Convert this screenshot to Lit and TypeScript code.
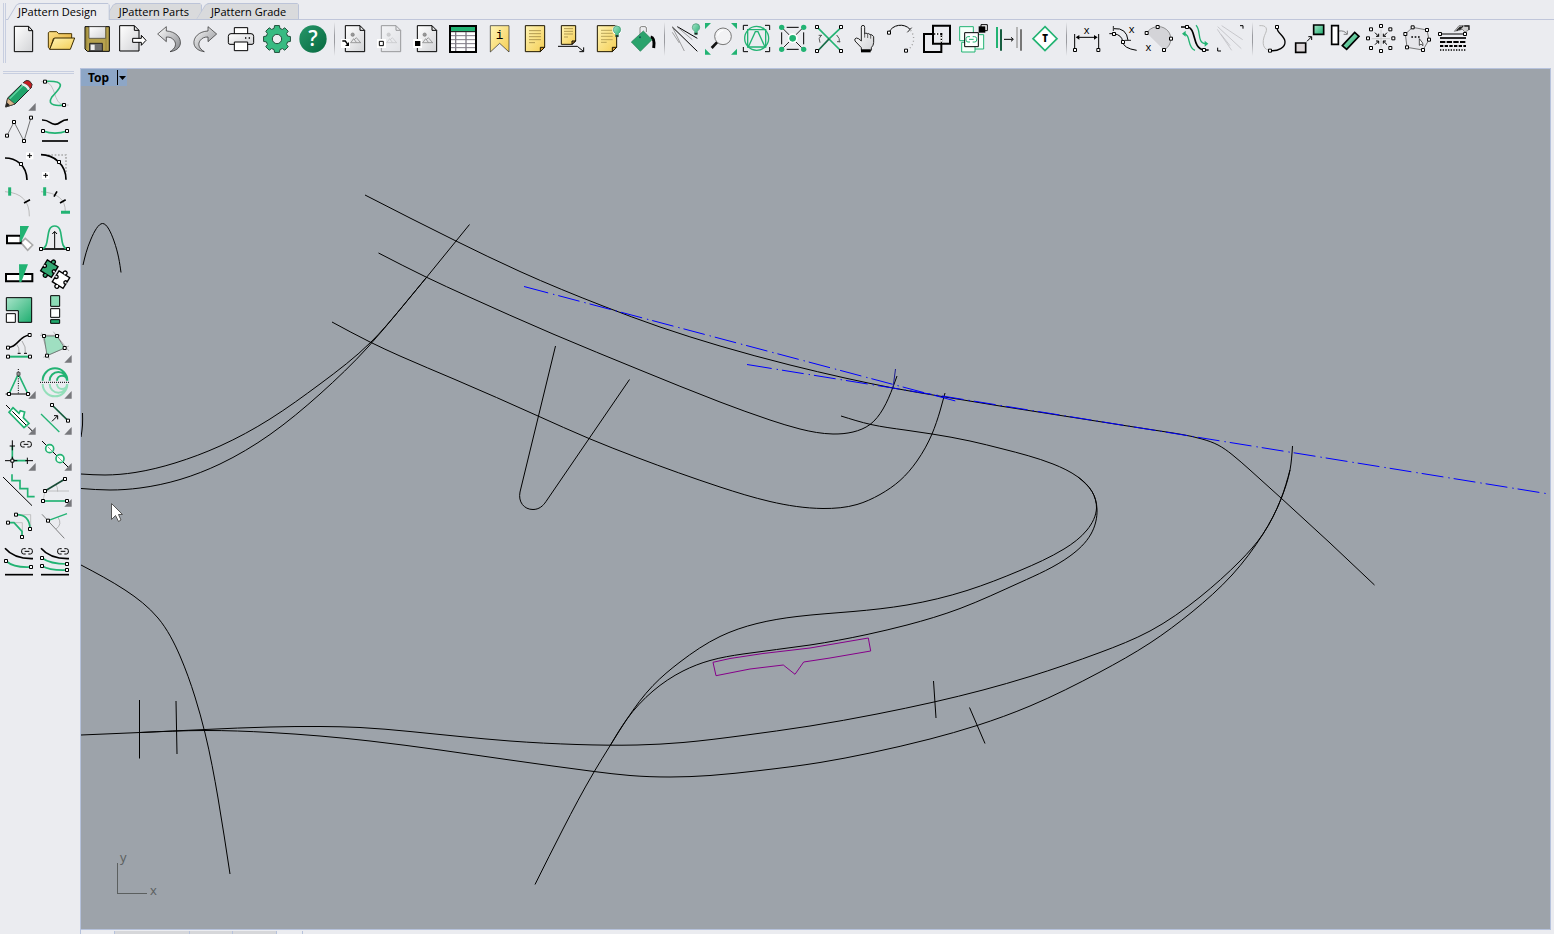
import { LitElement, html, svg, css, TemplateResult, SVGTemplateResult } from "lit";
import { customElement, property, state } from "lit/decorators.js";
import { classMap } from "lit/directives/class-map.js";

type Point = [number, number];
type Art = SVGTemplateResult;
interface Tool { name: string; art: Art; menu?: boolean }
/* A sheet holds icon artwork at three units per pixel; each cell is 108 units wide. */
interface Sheet { x: number; y: number; tools: Tool[] }

const GREEN = "#22b373";

const line = (d: string, color = "#000", width = 3, dash = ""): Art =>
  svg`<path d=${d} fill="none" stroke=${color} stroke-width=${width} stroke-dasharray=${dash}></path>`;
const shape = (d: string, fill = "#fff", stroke = "#000", width = 3): Art =>
  svg`<path d=${d} fill=${fill} stroke=${stroke} stroke-width=${width}></path>`;
const dot = (x: number, y: number, r: number, fill = GREEN, stroke = "none", width = 3): Art =>
  svg`<circle cx=${x} cy=${y} r=${r} fill=${fill} stroke=${stroke} stroke-width=${width}></circle>`;
const nodes = (...points: Point[]): Art =>
  svg`${points.map(([x, y]) => shape(`M${x - 4.5} ${y - 4.5}h9v9h-9Z`))}`;
const mark = (x: number, y: number, label: string, size: number, fill = "#000", weight = 400): Art =>
  svg`<text x=${x} y=${y} font-size=${size} fill=${fill} font-weight=${weight} text-anchor="middle">${label}</text>`;
const link = (x: number, y: number, color = "#000"): Art =>
  line(`M${x - 4} ${y - 8}h-6q-6 0 -6 6v4q0 6 6 6h6M${x + 4} ${y - 8}h6q6 0 6 6v4q0 6 -6 6h-6M${x - 7} ${y}h14`, color);
const bulb = (x: number, y: number): Art => svg`
  ${shape(`M${x - 4} ${y + 20}v-9q-7 -5 -7 -12a11 11 0 0 1 22 0q0 7 -7 12v9Z`, "url(#mint)", "#3d8f6d", 2)}
  ${line(`M${x - 4} ${y + 18}h8`, "#222", 5)}`;
const jigsaw = (x: number, y: number, fill: string): Art => svg`
  <path transform="translate(${x} ${y}) rotate(32)" fill=${fill} stroke="#000" stroke-width="4"
    d="M-19 -19H-4a6 6 0 1 1 8 0H19V-4a5 5 0 1 0 0 8V19H4a6 6 0 1 1 -8 0H-19V4a5 5 0 1 0 0 -8Z"></path>`;

const gear = (cx: number, cy: number): string => {
  const points: string[] = [];
  for (let i = 0; i < 8; i++) {
    const base = (i * Math.PI) / 4 - Math.PI / 2;
    for (const [offset, r] of [[-0.27, 33], [-0.18, 41], [0.18, 41], [0.27, 33]]) {
      points.push(`${(cx + r * Math.cos(base + offset)).toFixed(1)} ${(cy + r * Math.sin(base + offset)).toFixed(1)}`);
    }
  }
  return `M${points.join("L")}ZM${cx + 14} ${cy}a14 14 0 1 0 -28 0a14 14 0 1 0 28 0Z`;
};

const picturePage = (x: number): Art => svg`
  ${shape(`M${x} 77h44l14 14v64h-58Z`, "url(#paper)")}
  ${line(`M${x + 44} 77v14h14`)}
  ${dot(x + 22, 104, 5, "#999", "#777", 2)}
  ${line(`M${x + 15} 128h32M${x + 17} 127l8 -11l8 11M${x + 27} 119l6 -6l12 14`, "#777", 2)}`;

const fileSheet: Sheet = { x: 21, y: 63, tools: [
  { name: "New", art: svg`${shape("M43 79H86L98 92V155H43Z", "url(#paper)")}${line("M86 79V92H98")}` },
  { name: "Open", art: svg`
    ${shape("M145 98L149 95H170L176 101H215V116H160L150 148L145 142Z", "url(#gold)", "#4a3500")}
    ${shape("M149 148L163 114H224L211 148Z", "url(#yellow)", "#3b2b00")}` },
  { name: "Save", art: svg`
    ${shape("M255 80H328V154H262L255 147Z", "#b6a24e")}
    ${shape("M267 80H317V115H267Z", "url(#paper)", "#333", 2)}
    ${shape("M269 130H307V153H269Z", "#6f6f6f", "#222")}
    ${shape("M272 134H284V150H272Z", "#eee", "none")}
    ${line("M318 84V150M260 84V146", "#8c7a30", 2)}` },
  { name: "Export", art: svg`${shape("M359 77H403L417 91V153H359Z", "url(#paper)")}${line("M403 77V91H417")}
    ${shape("M398 115H424V106L438 121L424 136V127H398Z")}` },
  { name: "Undo", art: shape("M473 102L499 80V93C526 94 544 112 541 132C538 145 527 153 510 155C526 146 531 132 522 121C517 114 510 111 499 111V125Z", "url(#steel)", "#222", 2) },
  { name: "Redo", art: shape("M650 102L624 80V93C597 94 579 112 582 132C585 145 596 153 613 155C597 146 592 132 601 121C606 114 613 111 624 111V125Z", "url(#steel)", "#222", 2) },
  { name: "Print", art: svg`${shape("M703 83H743V106H703Z")}
    ${shape("M693 101H753Q761 101 761 109V128Q761 133 756 133H690Q685 133 685 128V109Q685 101 693 101Z", "url(#paper)")}
    ${shape("M703 126H743V152H703Z")}${line("M735 114H739M746 114H750", "#000", 4)}` },
  { name: "Options", art: svg`<path d=${gear(831, 117)} fill="#37bb82" fill-rule="evenodd" stroke="#23503d" stroke-width="3" stroke-linejoin="round"></path>` },
  { name: "Help", art: svg`${dot(939, 117, 41, "url(#help)")}${mark(939, 138, "?", 62, "#fff", 600)}` },
] };

const noteSheet: Sheet = { x: 21, y: 63, tools: [
  { name: "Insert picture", art: svg`${picturePage(46)}${shape("M33 117H60V144H33Z", "#fff", "none")}${line("M37 123H46L53 133", "#000", 4)}${shape("M57 126V138H45Z", "#000", "none")}` },
  { name: "Hide picture", art: svg`<g opacity="0.35">${picturePage(154)}</g>${shape("M141 117H168V144H141Z", "#fff", "none")}${shape("M148 124H160V137H148Z")}` },
  { name: "Show picture", art: svg`${picturePage(262)}${shape("M249 117H276V144H249Z", "#fff", "none")}${shape("M255 123H271V138H255Z", "#000", "none")}` },
  { name: "Table", art: svg`${shape("M360 78H438V156H360Z", "#fff", "#000", 6)}${shape("M363 81H435V93H363Z", GREEN, "none")}
    ${line("M363 95H435")}${line("M363 107H435M363 119H435M363 131H435M363 143H435", "#807c86")}${line("M377 96V153M408 96V153", "#807c86", 4)}` },
  { name: "Information", art: svg`${shape("M481 77H537V156L509 130L481 156Z", "url(#yellow)", "#222", 2)}
    <text class="mono" x="509" y="116" font-size="38" text-anchor="middle">i</text>` },
  { name: "Note", art: svg`${shape("M586 77H644V142L631 155H586Z", "url(#yellow)", "#1c1500")}${shape("M631 155V142H644Z", "#d89a2b", "#1c1500")}
    ${line("M597 92H633M597 101H633M597 110H633M597 119H633M597 128H615", "#b19a50")}` },
  { name: "Note leader", art: svg`${shape("M694 77H737V123L726 133H694Z", "url(#yellow)", "#1c1500")}${shape("M726 133V123H737Z", "#d89a2b")}
    ${line("M702 86H729M702 94H729M702 102H729M702 111H714", "#b19a50")}${line("M684 139H742L760 154M761 142V155H748")}` },
  { name: "Note visibility", art: svg`${shape("M802 77H860V142L847 155H802Z", "url(#yellow)", "#1c1500")}${shape("M847 155V142H860Z", "#d89a2b", "#1c1500")}
    ${line("M813 91H848M813 100H848M813 109H848M813 119H848M813 127H830", "#9a8540", 2)}${dot(861, 90, 14, "#fff")}${bulb(861, 90)}` },
  { name: "Fill", art: svg`${line("M962 111C972 113 974 124 971 144", "#000", 9)}${line("M930 110V84Q930 80 934 80H945Q949 80 949 84V96", "#fff", 6)}${line("M930 110V84Q930 80 934 80H945Q949 80 949 84V96", "#333", 2)}
    ${shape("M904 126L940 93L966 119L931 154Z", "#2aa36c", "#1d7a50", 2)}${dot(930, 112, 3, "#155")}` },
] };

const editSheet: Sheet = { x: 21, y: 18, tools: [
  { name: "Light lines", art: svg`${line("M37 36L112 109M52 35L112 70")}${line("M37 36L73 108M37 52L58 84M52 36L97 74", "#777", 2)}${bulb(108, 38)}` },
  { name: "Zoom window", art: svg`${shape("M135 24H153L135 42ZM213 24H231V42ZM135 119V101L153 119ZM231 119H213L231 101Z", GREEN, "none")}
    ${line("M173 80L155 99", "#111", 8)}${dot(189, 64, 25, "#f2f2f4", "#777")}${line("M173 62Q176 48 190 46", "#fff", 4)}` },
  { name: "Zoom pattern", art: svg`${line("M250 45V31H264M315 31H329V45M250 96V110H264M315 110H329V96")}
    ${line("M263 44H317V96H263ZM266 94L286 50H294L314 94", GREEN, 4)}${dot(290, 70, 36, "none", GREEN, 4)}` },
  { name: "Zoom nodes", art: svg`${line("M380 37H416M365 52V88M431 52V88M380 103H416")}${line("M370 42L388 60M425 42L407 60M370 98L388 80M425 98L407 80", "#222")}
    ${dot(365, 37, 8)}${dot(431, 37, 8)}${dot(365, 103, 8)}${dot(431, 103, 8)}${dot(398, 70, 15, "#fff")}${dot(398, 70, 10)}` },
  { name: "Split cross", art: svg`${line("M473 38L543 108", GREEN, 5)}${line("M543 38L508 71", GREEN, 5)}${line("M508 71L473 108", "#176d48", 5)}
    ${line("M484 60Q473 70 480 83M476 61H486M530 60Q541 70 538 82M541 80H531", "#555")}${nodes([471, 36], [543, 36], [471, 108], [543, 108])}` },
  { name: "Pick", art: svg`${shape("M604 78V37Q604 31 609 31T614 37V57Q616 52 623 56Q626 54 630 59Q636 57 641 65V82Q641 91 634 98V106H604V98L585 78Q582 71 589 69Q596 69 604 78Z", "url(#paper)", "#222")}
    ${line("M614 56V68M623 57V69M632 60V71", "#222", 2)}${shape("M603 103H632V112H603Z", "#000", "none")}` },
  { name: "Extend arc", art: svg`${line("M687 53C696 28 733 23 750 43")}${line("M752 46C766 65 764 90 742 106", "#999", 4, "3 8")}${line("M742 52L755 38", "#222")}${nodes([687, 53], [738, 107])}` },
  { name: "Merge", art: svg`${line("M792 57H844V111H792ZM819 32H870V86H819Z", "#000", 6)}${line("M822 57H842", "#fff", 7)}${line("M844 61V84", "#fff", 7)}${line("M822 57H844V84", "#000", 4, "4 5")}` },
  { name: "Linked copies", art: svg`${shape("M899 35H940V77H899Z", "#f5fff9", GREEN)}${shape("M930 59H971V102H930Z", "#f5fff9", GREEN)}${shape("M905 82H945V111H905Z", "#f5fff9", GREEN)}
    ${shape("M914 53H955V95H914Z")}${link(934, 73, GREEN)}${shape("M963 29H982V47H963Z")}${shape("M956 34H976V53H956Z", "#000", "none")}` },
  { name: "Mirror", art: svg`${line("M1011 36V99", GREEN, 6)}${line("M1023 43V107", "#165d40", 6)}${line("M1032 73H1058M1053 67L1060 73L1053 79")}${line("M1071 36V99", "#aaa", 5)}${line("M1083 43V107", "#777", 6)}` },
  { name: "Text tag", art: svg`${shape("M1155 35L1191 71L1155 107L1119 71Z", "#fff", GREEN, 5)}${mark(1155, 81, "T", 29, "#000", 800)}` },
] };

const measureSheet: Sheet = { x: 57, y: 18, tools: [
  { name: "Distance", art: svg`${line("M74 57V102M146 57V102M82 67H138")}${shape("M77 67L88 60V74ZM143 67L132 60V74Z", "#000", "none")}${mark(110, 58, "x", 33)}${nodes([75, 105], [145, 105])}` },
  { name: "Curve length", art: svg`${line("M178 56H192Q216 60 218 80T260 106M192 41Q230 38 234 76")}${line("M190 33V48M225 76H243", "#222")}${mark(245, 55, "x", 33)}${nodes([192, 57], [219, 81])}` },
  { name: "Circle area", art: svg`${shape("M290 54C302 35 330 27 350 44C372 64 362 95 342 105Z", "#d4d4d8", "none")}${line("M290 54C302 35 330 27 350 44C372 64 362 95 342 105", "#666", 2)}
    ${mark(295, 107, "x", 33)}${nodes([290, 54], [323, 36], [363, 71], [342, 105])}` },
  { name: "Offset flow", art: svg`${line("M393 36H411C441 38 424 100 462 105H476", "#000", 5)}${line("M438 31C454 45 440 84 466 86M401 56C424 58 410 98 435 106", GREEN, 4)}
    ${shape("M464 77L475 86L464 95ZM407 47L396 56L407 65Z", GREEN, "none")}${nodes([411, 36], [462, 105])}` },
  { name: "Grade rays", art: svg`${line("M502 43L545 106M503 35L574 101M515 32L578 74M513 58L540 92", "#b5b5ba", 2)}${line("M570 32H579V41M503 98V108H513")}` },
] };

const modifySheet: Sheet = { x: 615, y: 18, tools: [
  { name: "Follow curve", art: svg`${line("M628 32C650 30 653 42 646 56S632 102 658 106", "#bbb")}${line("M681 38C681 55 704 62 705 80C706 98 684 109 662 107", "#000", 4)}${nodes([681, 36], [660, 107])}` },
  { name: "Scale move", art: svg`${shape("M737 84H767V112H737Z", "#dcd6d8", "#000", 5)}${shape("M791 30H821V58H791Z", "url(#mint)", "#000", 5)}${line("M771 79L784 66M775 65H785V75")}` },
  { name: "Rotate piece", art: svg`${shape("M845 32H865V88H845Z", "#fff", "#000", 5)}${shape("M877 92L914 52L927 64L890 103Z", "url(#mint)", "#000", 5)}${line("M867 48Q883 46 890 56M892 47V58H881", "#444", 2)}` },
  { name: "Converge nodes", art: svg`${line("M965 71H1020M993 44V98", "#bbb", 2)}${line("M975 53L986 64M1011 53L1000 64M975 89L986 78M1011 89L1000 78M986 56V64H978M1000 56V64H1008M978 78H986V86M1008 78H1000V86", "#000", 3)}
    ${nodes([993, 33], [963, 43], [1021, 43], [954, 70], [1030, 70], [963, 99], [1021, 99], [993, 108])}` },
  { name: "Select nodes", art: svg`${shape("M1088 37L1131 45L1137 74L1119 105L1071 97L1066 57Z", "#e6e6ea", "#777")}${line("M1084 66H1113", "#000", 4, "5 5")}
    ${shape("M1108 71V91L1113 87L1119 92L1118 84Z", "#fff", "#000", 2)}${nodes([1088, 37], [1131, 45], [1137, 74], [1119, 105], [1071, 97], [1066, 57])}` },
  { name: "Line styles", art: svg`${line("M1174 57H1241")}${line("M1170 69H1248", "#000", 5)}${line("M1170 81H1248", "#000", 6, "16 4")}${line("M1170 93H1248", "#000", 6, "10 4")}${line("M1170 105H1248", "#000", 5, "4 4")}
    ${shape("M1213 49L1227 32H1256V45L1245 51L1237 43Z", "#d0d0d0", "#555", 2)}${line("M1220 47L1232 35M1228 44L1239 33M1243 33H1257V45", "#222", 4)}${nodes([1170, 57], [1245, 57])}` },
] };

const drawSheet: Sheet = { x: 3, y: 33, tools: [
  { name: "Pencil", menu: true, art: svg`${shape("M17 126L23 99L72 51Q80 43 89 49Q100 57 94 68L45 117Z", "#1fa46b", "#222")}
    ${shape("M17 126L23 99L45 117Z", "#d9b48a", "#333", 2)}${shape("M17 126L20 112L30 121Z", "#222", "none")}
    ${shape("M72 51Q80 43 89 49Q100 57 94 68L90 71Q85 58 68 55Z", "#c41e22", "#333", 2)}${line("M65 57Q81 61 87 74", "#eee", 7)}${line("M29 101L68 62", "#63d4a2", 4)}` },
  { name: "Curve", art: svg`${line("M124 50H135C170 56 158 117 192 120H206", "#aaa", 2)}${line("M135 49C215 45 170 78 155 97C138 123 175 123 192 120", GREEN, 5)}${nodes([135, 50], [192, 120])}` },
  { name: "Polyline", art: svg`${line("M21 212L42 171L72 228L93 158", "#333", 2)}${nodes([21, 212], [42, 171], [72, 228], [93, 158])}` },
  { name: "Blend curves", art: svg`${line("M126 165C150 164 148 178 165 178S181 164 204 164", "#000", 5)}${line("M129 198Q165 211 201 198", GREEN, 5)}${line("M126 228H204", "#000", 5)}${nodes([129, 198], [201, 198])}` },
  { name: "Arc point", art: svg`${shape("M78 262H100V283H78Z", "#fff", "none")}${line("M82 272H96M89 265V279")}${line("M15 279C45 279 80 298 81 345", "#000", 5)}${nodes([63, 297])}` },
  { name: "Arc corner", art: svg`${line("M144 270H198V325", "#aaa", 5, "5 5")}${line("M123 269C160 269 198 298 198 344", "#000", 5)}${shape("M126 321H148V342H126Z", "#fff", "none")}${line("M130 331H144M137 324V338")}${nodes([177, 291])}` },
  { name: "Mark end", art: svg`${line("M15 380Q89 385 88 454", "#bbb")}${line("M29 367V392", GREEN, 9)}${line("M72 414L90 404", "#000", 5)}` },
  { name: "Mark series", art: svg`${line("M123 380Q197 385 196 440", "#bbb")}${line("M134 367V392M183 442H210", GREEN, 9)}${line("M162 395L171 379M180 414L197 404", "#000", 5)}` },
] };

const pieceSheet: Sheet = { x: 3, y: 0, tools: [
  { name: "Cut fold", art: svg`${shape("M63 68L76 55L98 75L83 91Z", "#fff", "#aaa", 5)}${shape("M21 47H62V70H21Z", "#fff", "#000", 6)}${shape("M60 18H87L63 66H60Z", GREEN, "none")}` },
  { name: "Bell", art: svg`${line("M124 87H204", "#000", 5)}${line("M124 87C154 84 132 18 164 18S173 84 204 87", GREEN, 5)}${line("M164 85V36M157 42L164 34L171 42")}${nodes([123, 87], [204, 87])}` },
  { name: "Cut", art: svg`${shape("M18 162H97V184H18Z", "#fff", "#000", 6)}${shape("M57 133H84L64 186H58Z", GREEN, "none")}` },
  { name: "Puzzle", art: svg`${jigsaw(148, 146, "#33a873")}${jigsaw(183, 179, "#fff")}` },
  { name: "Notch corner", art: svg`${shape("M19 233H95V307H55V272H19Z", "url(#mint)")}${shape("M19 281H46V307H19Z")}` },
  { name: "Stack", art: svg`${shape("M152 227H179V259H152Z", "#8ddcb7")}${shape("M152 266H179V292H152Z")}${shape("M152 299H179V310H152Z", "#20a86c")}` },
  { name: "Project", art: svg`${line("M24 383C56 381 55 348 89 345", "#000", 5)}${line("M50 373Q59 382 57 400M66 363Q79 380 76 400", "#888", 2)}${line("M53 400H62M72 400H81")}${line("M24 410H90", GREEN, 6)}${nodes([24, 383], [89, 345], [24, 410], [90, 410])}` },
  { name: "Warp", menu: true, art: svg`${line("M125 338L148 419M120 346H180M160 335L207 393M130 412L207 378", "#999", 2)}${shape("M132 348H171L194 384L141 407Z", "#9fdfc1", "#555", 2)}${nodes([132, 348], [171, 348], [194, 384], [141, 407])}` },
  { name: "Dart", menu: true, art: svg`${line("M17 522H91")}${line("M27 522L55 462L84 522", GREEN, 5)}${line("M55 447V522", "#000", 3, "3 4")}${shape("M51 457H60V466H51Z", "#999", "#555")}${nodes([27, 522], [84, 522])}` },
  { name: "Ripple", menu: true, art: svg`${line("M128 482A37 37 0 0 1 202 482M149 482A26 26 0 0 1 201 482M171 482A15 15 0 0 1 201 482", GREEN, 6)}
    ${line("M128 492A37 37 0 0 0 202 492M149 492A26 26 0 0 0 201 492M171 492A15 15 0 0 0 201 492", "#94dfba", 6)}${line("M120 487H207", "#000", 3, "3 3")}` },
] };

const shapeSheet: Sheet = { x: 3, y: 15, tools: [
  { name: "Slot", menu: true, art: svg`${shape("M39 38L57 55L61 47L74 51L70 68L87 85L72 98L27 52Z", "#fff", GREEN, 5)}${line("M18 30L30 42M37 49L78 90M84 95L99 110", "#000", 3)}` },
  { name: "Move parallel", menu: true, art: svg`${line("M123 57L178 111", GREEN, 4)}${line("M156 30L204 77", "#155b3d", 5)}${line("M156 79L172 63M162 62H173V73")}${nodes([156, 30], [204, 77])}` },
  { name: "Link axes", menu: true, art: svg`${line("M37 197V153M36 197H80", GREEN, 5)}${line("M37 136V166M37 185V219M15 197H52M76 197H99M29 153H45M82 188V207")}${nodes([37, 197])}${link(78, 148)}` },
  { name: "Holes", menu: true, art: svg`${line("M126 138L211 223")}${dot(149, 161, 12, "#f5fff9", GREEN, 5)}${dot(180, 191, 12, "#f5fff9", GREEN, 5)}${line("M144 156L156 168M174 186L186 198", "#666", 2)}` },
  { name: "Stairs", art: svg`${line("M9 246L96 332")}${line("M36 238V257H60V281H83V305H104", GREEN, 5)}` },
  { name: "Align angle", menu: true, art: svg`${line("M135 288H207M168 269Q174 278 173 290M135 288L129 318", "#aaa", 2)}${line("M135 288L195 252", "#174b36", 5)}${line("M129 318H201", GREEN, 5)}${nodes([135, 288], [195, 252], [129, 318], [201, 318])}` },
  { name: "Round corner", art: svg`${line("M48 359H92V402M24 383H67V426", "#aaa", 2)}${line("M48 359Q89 358 90 402M24 383H42L66 409V426", GREEN, 5)}${nodes([48, 359], [90, 402], [24, 383], [66, 426])}` },
  { name: "Rotate line", art: svg`${line("M126 358L193 430", "#444", 2)}${line("M174 367Q188 388 168 402", "#999", 2)}${line("M144 377L201 356", GREEN, 4)}${nodes([144, 377])}` },
  { name: "Link offset", art: svg`${line("M15 460C32 480 57 492 99 491", "#000", 5)}${line("M18 498Q42 519 93 516", GREEN, 5)}${line("M15 539H99", "#000", 5)}${nodes([18, 498], [93, 516])}${link(81, 469)}` },
  { name: "Link offsets", art: svg`${line("M123 460C140 480 165 492 207 491", "#000", 5)}${line("M126 489Q150 507 201 507M126 513Q150 527 201 525", GREEN, 5)}${line("M123 539H207", "#000", 5)}${nodes([126, 489], [201, 507], [126, 513], [201, 525])}${link(189, 469)}` },
] };

/* First derivatives of the natural cubic spline through the values, with steps h. */
function slopes(v: number[], h: number[]): number[] {
  const n = v.length;
  const diag = new Array<number>(n).fill(2);
  const upper = new Array<number>(n).fill(1);
  const lower = new Array<number>(n).fill(1);
  const rhs = new Array<number>(n).fill(0);
  rhs[0] = (3 * (v[1] - v[0])) / h[0];
  rhs[n - 1] = (3 * (v[n - 1] - v[n - 2])) / h[n - 2];
  for (let i = 1; i < n - 1; i++) {
    lower[i] = 1 / h[i - 1];
    upper[i] = 1 / h[i];
    diag[i] = 2 * (lower[i] + upper[i]);
    rhs[i] = 3 * ((v[i] - v[i - 1]) / h[i - 1] ** 2 + (v[i + 1] - v[i]) / h[i] ** 2);
  }
  for (let i = 1; i < n; i++) {
    const k = lower[i] / diag[i - 1];
    diag[i] -= k * upper[i - 1];
    rhs[i] -= k * rhs[i - 1];
  }
  const out = new Array<number>(n);
  out[n - 1] = rhs[n - 1] / diag[n - 1];
  for (let i = n - 2; i >= 0; i--) out[i] = (rhs[i] - upper[i] * out[i + 1]) / diag[i];
  return out;
}

/* Spline path through the points, parameterised by chord length. */
function smooth(points: Point[]): string {
  const h = points.slice(1).map((p, i) => Math.hypot(p[0] - points[i][0], p[1] - points[i][1]));
  const sx = slopes(points.map((p) => p[0]), h);
  const sy = slopes(points.map((p) => p[1]), h);
  let d = `M${points[0].join(" ")}`;
  for (let i = 0; i < h.length; i++) {
    const [p, q, s] = [points[i], points[i + 1], h[i] / 3];
    d += `C${[p[0] + sx[i] * s, p[1] + sy[i] * s, q[0] - sx[i + 1] * s, q[1] - sy[i + 1] * s].map((n) => n.toFixed(2)).join(" ")} ${q.join(" ")}`;
  }
  return d;
}

const curves: Point[][] = [
  [[365, 195], [410, 218], [456, 241], [520, 271.5], [603, 306], [660, 327], [720, 346], [790, 365], [845, 378], [893, 388], [942, 396.5], [1000, 406], [1080, 418.5], [1160, 431], [1182, 434.5], [1202, 439], [1218, 445], [1232, 454.5], [1250, 470], [1281, 498], [1330, 543], [1374.5, 585]],
  [[378.5, 253], [426, 277], [467, 296], [553, 334], [640, 370], [720, 402], [770, 420], [800, 429], [833, 434], [853, 432], [870, 424.5], [883, 409], [893, 387], [897, 376]],
  [[332, 322], [370, 342], [400, 356], [455, 379.5], [538, 416], [589, 438.5], [637, 457.5], [720, 487], [770, 501.5], [823, 508.5], [857, 504.5], [880, 494.5], [900, 480.5], [917, 461], [932, 434], [940, 411], [945, 393]],
  [[469.5, 224.5], [426, 278], [400, 309.5], [371, 342], [320, 384], [270, 419], [220, 446], [175, 463], [135, 472.5], [105, 475], [81, 474]],
  [[426, 278], [400, 309.5], [368, 347], [320, 394], [270, 434.5], [220, 464], [180, 479.5], [140, 488], [110, 490], [81, 488.5]],
  [[83, 265], [91, 239], [102.5, 223.5], [114, 241], [121, 272.5]],
  [[82.5, 413], [82.5, 425], [81, 437]],
  [[841, 416], [871, 424.5], [905, 430], [932, 434], [970, 441], [1003, 449], [1053, 464], [1078, 477], [1092, 491.5], [1096.5, 508], [1087, 530], [1064, 549], [1020, 570.5], [967, 590.5], [907, 605], [853, 611.5], [797, 616.5], [757, 623.5], [720, 636.5], [680, 662], [653, 685.5], [627, 719], [610.5, 745], [594, 772], [563, 829], [535, 884.5]],
  [[1078, 477], [1092, 491.5], [1097, 509], [1091, 534], [1070, 556], [1020, 582.5], [960, 608.5], [907, 625], [867, 634.5], [810, 645], [743, 654], [710, 660.5], [683, 671], [653, 691], [627, 719], [610.5, 745]],
  [[1292.5, 446], [1290, 470], [1281, 499], [1263, 534], [1240, 561], [1200, 597], [1150, 631], [1100, 652.5], [1030, 676.5], [983, 690], [934, 702], [877, 714], [810, 726], [743, 735.5], [683, 742.5], [637, 745], [577, 744.5], [510, 741], [460, 736.5], [410, 731.5], [360, 727.5], [320, 726.5], [270, 727], [205, 729.5], [140, 732.5], [81, 735]],
  [[1290, 470], [1281, 499], [1263, 534], [1232, 575], [1192, 612], [1150, 643], [1100, 672], [1030, 706], [977, 725.5], [930, 739], [870, 753], [820, 762.5], [760, 770.5], [710, 775.5], [670, 777], [630, 775.5], [594, 771.5], [510, 760], [440, 750], [370, 741], [320, 736], [270, 732.5], [205, 730.5], [140, 732.5]],
  [[81, 565], [125, 590], [158, 618], [180, 656], [195, 697], [205, 733], [218, 798], [230, 874]],
];

const strokes = [
  "M555.5 346L520 492C518 502 524 509.5 533 509.5C539 509.5 543 506 546 501.5L629.5 379.5",
  "M139.5 700V758.5M176 701L177 754M933.5 681L936 718M969.5 707.5L985 743.5",
];

@customElement("icon-art")
class IconArt extends LitElement {
  @property({ attribute: false }) tool!: Tool;
  @property({ type: Number }) x = 0;
  @property({ type: Number }) y = 0;

  static styles = css`
    :host { display: block; }
    .icon { display: block; width: 36px; height: 36px; overflow: visible; font-family: "Open Sans", "Noto Sans", sans-serif; }
    .mono { font-family: "Liberation Mono", monospace; }
  `;

  private gradient(id: string, from: string, to: string) {
    return svg`<linearGradient id=${id} x1="0" y1="0" x2="1" y2="1">
      <stop offset="0" stop-color=${from}></stop><stop offset="1" stop-color=${to}></stop></linearGradient>`;
  }

  render() {
    const { tool, x, y } = this;
    return html`<svg class="icon" viewBox="${x} ${y} 108 108" aria-hidden="true">
      <defs>
        ${this.gradient("paper", "#ffffff", "#d2d3d6")}
        ${this.gradient("yellow", "#fff4b4", "#f4ce55")}
        ${this.gradient("gold", "#ffe38a", "#dba128")}
        ${this.gradient("steel", "#ffffff", "#85878c")}
        ${this.gradient("mint", "#a8e4c9", "#1fae70")}
        ${this.gradient("help", "#27976a", "#07693f")}
      </defs>
      ${tool.art}
      ${tool.menu ? svg`<path d="M${x + 104} ${y + 81}v23h-22Z" fill="#77787c"></path>` : ""}
    </svg>`;
  }
}

@customElement("app-root")
class AppRoot extends LitElement {
  @state() private active = 0;

  static styles = css`
    :host {
      display: grid;
      grid-template-rows: auto 1fr;
      height: 100vh;
      overflow: hidden;
      background: #ebecf0;
      color: #000;
      font-family: "Open Sans", "Noto Sans", sans-serif;
      font-size: 12px;
    }
    button { margin: 0; padding: 0; border: 0; background: none; color: inherit; font: inherit; }
    .ribbon { display: flex; height: 68px; box-sizing: border-box; padding: 3px 0 5px 3px; }
    .grip { flex: none; box-sizing: border-box; width: 3px; border: solid #c7cee0; border-width: 0 1px; }
    .rows { flex: 1; min-width: 0; }
    .tabs { display: flex; height: 17px; padding-left: 1px; box-shadow: inset 0 -1px #c0c6da; }
    .tab {
      position: relative;
      height: 17px;
      padding: 0 13px 0 15px;
      background: #bcc4d8;
      clip-path: polygon(0 100%, 9px 2px, 12px 0, calc(100% - 2px) 0, 100% 2px, 100% 100%);
      line-height: 17px;
      white-space: nowrap;
      font-size: 11px;
    }
    .tab::before {
      content: "";
      position: absolute;
      inset: 1px 1px 1px 1px;
      background: #d9dadc;
      clip-path: polygon(0 100%, 9px 1px, 12px 0, 100% 0, 100% 100%);
    }
    .tab:first-child { padding-left: 11px; }
    .tab + .tab { margin-left: -6px; }
    .tab.on { z-index: 1; }
    .tab.on::before { background: #ebecf0; bottom: 0; }
    .tab span { position: relative; }
    .tools { display: flex; padding: 1px 0 0 1px; }
    .tool { display: block; flex: none; width: 36px; height: 36px; }
    .bar {
      flex: none;
      width: 1px;
      height: 34px;
      margin: 1px 2px 0 3px;
      background: linear-gradient(transparent, #9a9ba0 40%, #9a9ba0 60%, transparent);
    }
    .work { display: grid; grid-template-columns: 80px 1fr; min-height: 0; }
    .side { padding: 3px 0 0 1px; }
    .handle { width: 71px; height: 3px; box-sizing: border-box; margin: 0 0 2px 2px; border: solid #c7cee0; border-width: 1px 0; }
    .palette { display: grid; grid-template-columns: 36px 36px; }
    .stage { display: flex; flex-direction: column; min-width: 0; padding-right: 3px; }
    .viewport { position: relative; flex: 1; min-height: 0; border: 1px solid #b6c2dc; background: #9da3aa; }
    .drawing { display: block; width: 100%; height: 100%; position: absolute; inset: 0; }
    .axis { position: absolute; left: 36px; bottom: 35px; width: 29px; height: 30px; border: solid #5b5f5f; border-width: 0 0 1px 1px; }
    .axis span { position: absolute; color: #5b5f5f; font-size: 13px; line-height: 16px; }
    .axis .y { left: 2px; top: -14px; }
    .axis .x { left: 32px; bottom: -5px; }
    .title {
      position: absolute;
      left: 0;
      top: 0;
      display: flex;
      align-items: center;
      gap: 8px;
      height: 17px;
      padding: 0 1px 0 7px;
      background: #8da6c6;
      font-family: "Noto Sans", sans-serif;
      font-weight: 700;
    }
    .arrow { display: flex; align-items: center; height: 15px; padding-left: 1px; border-left: 1px solid #000; }
    .arrow svg { width: 7px; height: 4px; display: block; }
    .pages { display: flex; flex: none; height: 4px; box-sizing: border-box; padding-top: 1px; border-left: 1px solid #b6c2dc; }
    .page { box-sizing: border-box; border-right: 1px solid #b6c2dc; background: #d6d7da; }
    .page.plain { background: none; }
  `;

  private tool(tool: Tool, x: number, y: number): TemplateResult {
    return html`<button class="tool" type="button" aria-label=${tool.name}>
      <icon-art .tool=${tool} .x=${x} .y=${y}></icon-art>
    </button>`;
  }

  private group(sheet: Sheet): TemplateResult {
    return html`${sheet.tools.map((t, i) => this.tool(t, sheet.x + i * 108, sheet.y))}`;
  }

  private pairs(sheet: Sheet): TemplateResult {
    return html`${sheet.tools.map((t, i) => this.tool(t, sheet.x + (i % 2) * 108, sheet.y + Math.floor(i / 2) * 108))}`;
  }

  render() {
    const names = ["JPattern Design", "JPattern Parts", "JPattern Grade"];
    const groups = [fileSheet, noteSheet, editSheet, measureSheet, modifySheet];
    return html`
      <header class="ribbon">
        <div class="grip"></div>
        <div class="rows">
          <div class="tabs" role="tablist">
            ${names.map((name, i) => html`<button
              type="button" role="tab" aria-selected=${i === this.active}
              class=${classMap({ tab: true, on: i === this.active })}
              @click=${() => (this.active = i)}><span>${name}</span></button>`)}
          </div>
          <div class="tools" role="toolbar" aria-label="Pattern design">
            ${groups.map((g, i) => html`${i ? html`<div class="bar"></div>` : ""}${this.group(g)}`)}
          </div>
        </div>
      </header>
      <div class="work">
        <aside class="side">
          <div class="handle"></div>
          <div class="palette" role="toolbar" aria-label="Drawing tools">
            ${[drawSheet, pieceSheet, shapeSheet].map((s) => this.pairs(s))}
          </div>
        </aside>
        <main class="stage">
          <div class="viewport">
            <svg class="drawing" role="img" aria-label="Shoe pattern curves">
              <g transform="translate(-81 -69)" fill="none" stroke="#000" stroke-width="1">
                ${curves.map((c) => svg`<path d=${smooth(c)}></path>`)}
                ${strokes.map((d) => svg`<path d=${d}></path>`)}
                <path d="M524 286.5L957.5 401.5M747 364.5L1546 493.5" stroke="#0000ff" stroke-dasharray="22 5 1.4 4" stroke-dashoffset="-3"></path>
                <path d="M524 286.5l3 0.8M747 364.5l3 0.5" stroke="#0000ff"></path>
                <path d="M895.5 369L893 388" stroke="#1c1c90"></path>
                <path d="M713 662.3L730 658.5L763 653.5L810 648L868.3 638L870.7 651L830 658L803.7 662L795 674.3L783.3 665L750 669L716 675.7Z" stroke="#86008a"></path>
                <path d="M111.5 503.5V519.5L115.5 515.5L118.5 521.5L121 520L118.5 514.5H122.5Z" fill="#fff" stroke="#555"></path>
              </g>
            </svg>
            <button class="title" type="button">Top
              <span class="arrow"><svg viewBox="0 0 7 4" aria-hidden="true"><path d="M0 0H7L3.5 4Z"></path></svg></span>
            </button>
            <div class="axis"><span class="y">y</span><span class="x">x</span></div>
          </div>
          <div class="pages">
            ${[34, 75, 43, 44, 26].map((w, i) => html`<div class=${classMap({ page: true, plain: i === 0 || i === 4 })} style="width:${w}px"></div>`)}
          </div>
        </main>
      </div>
    `;
  }
}
